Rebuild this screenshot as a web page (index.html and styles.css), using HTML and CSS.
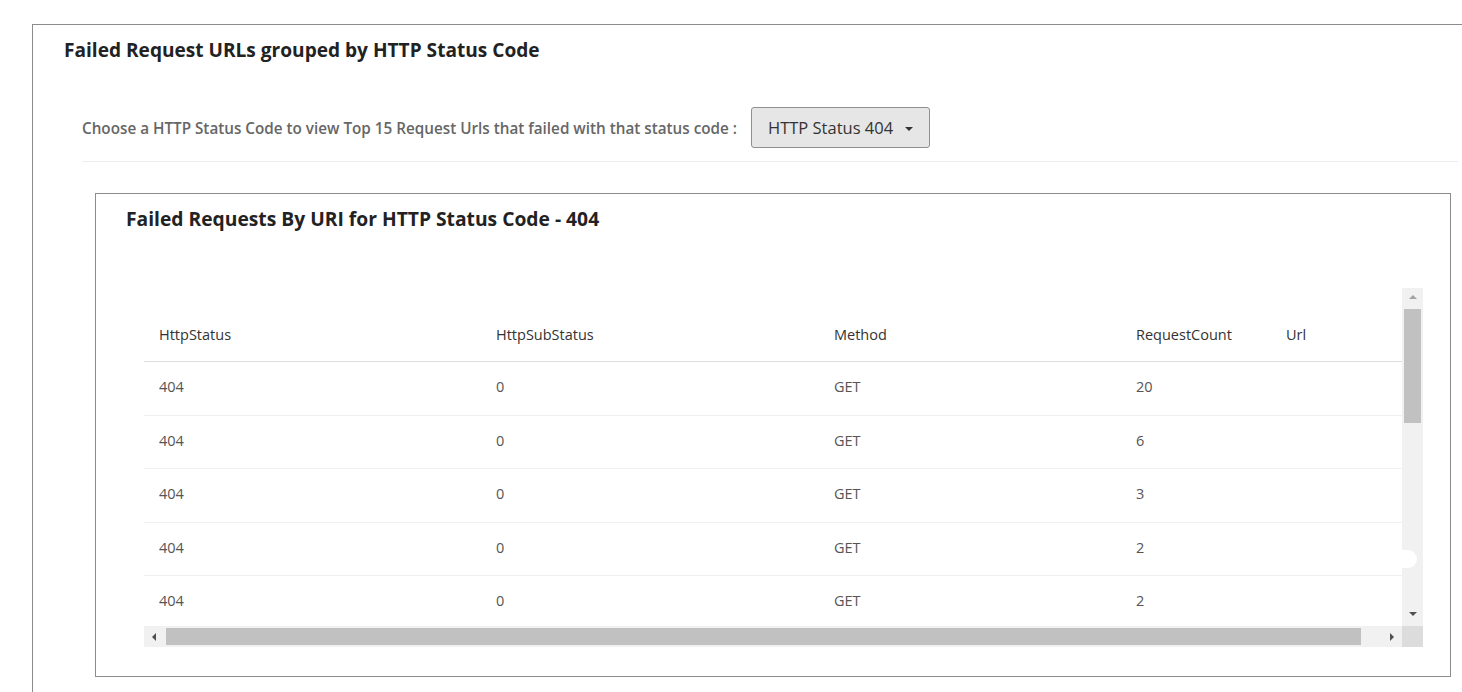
FILE: index.html
```html
<!DOCTYPE html>
<html>
<head>
<meta charset="utf-8">
<link rel="stylesheet" href="styles.css">
</head>
<body>
<div class="outer">
  <h1 class="title">Failed Request URLs grouped by HTTP Status Code</h1>
  <div class="filter">
    <span class="filter-label">Choose a HTTP Status Code to view Top 15 Request Urls that failed with that status code :</span>
    <button class="dropdown">HTTP Status 404 <span class="caret"></span></button>
  </div>
  <div class="divider"></div>
  <div class="inner">
    <h2 class="inner-title">Failed Requests By URI for HTTP Status Code - 404</h2>
    <div class="scrollbox">
      <div class="viewport">
        <table class="grid">
          <colgroup>
            <col class="c1"><col class="c2"><col class="c3"><col class="c4"><col class="c5">
          </colgroup>
          <thead>
            <tr><th>HttpStatus</th><th>HttpSubStatus</th><th>Method</th><th>RequestCount</th><th>Url</th></tr>
          </thead>
          <tbody>
            <tr><td>404</td><td>0</td><td>GET</td><td>20</td><td></td></tr>
            <tr><td>404</td><td>0</td><td>GET</td><td>6</td><td></td></tr>
            <tr><td>404</td><td>0</td><td>GET</td><td>3</td><td></td></tr>
            <tr><td>404</td><td>0</td><td>GET</td><td>2</td><td></td></tr>
            <tr><td>404</td><td>0</td><td>GET</td><td>2</td><td></td></tr>
          </tbody>
        </table>
      </div>
      <div class="vbar">
        <div class="sbtn"><span class="arr up"></span></div>
        <div class="vtrack"><div class="vthumb"></div></div>
        <div class="sbtn"><span class="arr down"></span></div>
      </div>
      <div class="hbar">
        <div class="sbtn"><span class="arr left"></span></div>
        <div class="htrack"><div class="hthumb"></div></div>
        <div class="sbtn"><span class="arr right"></span></div>
      </div>
      <div class="corner"></div>
      <div class="blot"></div>
    </div>
  </div>
</div>
</body>
</html>
```
FILE: styles.css
```css
html, body {
  margin: 0;
  padding: 0;
  background: #fff;
  overflow: hidden;
  height: 692px;
}
body {
  font-family: "Open Sans", "Noto Sans", sans-serif;
  color: #333;
}
.outer {
  margin: 24px 0 0 32px;
  border-top: 1px solid #8c8c8c;
  border-left: 1px solid #8c8c8c;
  padding: 12px 0 40px 31px;
}
.title {
  margin: 0;
  font-size: 19.1px;
  line-height: 26px;
  font-weight: 700;
  color: #222;
}
.filter {
  display: flex;
  align-items: center;
  margin: 44px 0 0 18px;
  gap: 14px;
}
.filter-label {
  font-size: 15.25px;
  font-weight: 600;
  color: #666;
}
.dropdown {
  display: flex;
  align-items: center;
  gap: 12px;
  height: 41px;
  padding: 0 16px 0 16px;
  background: #e6e6e6;
  border: 1px solid #8f8f8f;
  border-radius: 3px;
  font-family: inherit;
  font-size: 16.5px;
  color: #333;
}
.caret {
  width: 0;
  height: 0;
  border-left: 4.5px solid transparent;
  border-right: 4.5px solid transparent;
  border-top: 4.5px solid #333;
  margin-top: 2px;
}
.divider {
  height: 1px;
  background: #eeeeee;
  margin: 13px 4px 0 18px;
}
.inner {
  margin: 31px 0 0 31px;
  width: 1356px;
  box-sizing: border-box;
  border: 1px solid #8c8c8c;
  padding: 12px 27px 29px 48px;
}
.inner-title {
  margin: 0 0 0 -18px;
  font-size: 19.25px;
  line-height: 26px;
  font-weight: 700;
  color: #222;
}
.scrollbox {
  position: relative;
  margin-top: 56px;
  height: 359px;
  display: grid;
  grid-template-columns: 1fr 21px;
  grid-template-rows: 1fr 21px;
}
.viewport {
  overflow: hidden;
}
.grid {
  border-collapse: collapse;
  table-layout: fixed;
  width: 1290px;
  font-size: 14.5px;
}
.c1 { width: 337px; }
.c2 { width: 338px; }
.c3 { width: 302px; }
.c4 { width: 150px; }
.c5 { width: 163px; }
.grid th {
  text-align: left;
  font-weight: 400;
  color: #333;
  padding: 36px 15px 15px;
  line-height: 22px;
  border-bottom: 1px solid #dddddd;
}
.grid td {
  color: #555;
  padding: 15px 15px 17.5px;
  line-height: 20px;
  border-bottom: 1px solid #f0f0f0;
}
.vbar, .hbar {
  background: #f1f1f1;
  display: flex;
}
.vbar { flex-direction: column; }
.sbtn {
  flex: 0 0 21px;
  height: 21px;
  display: flex;
  align-items: center;
  justify-content: center;
}
.vtrack {
  flex: 1;
  padding: 0 2px;
}
.vthumb {
  height: 114px;
  background: #c1c1c1;
}
.htrack {
  flex: 1;
  padding: 2px 0;
}
.hthumb {
  width: 1195px;
  height: 17px;
  margin-left: 1px;
  background: #c1c1c1;
}
.corner { background: #dcdcdc; }
.arr { width: 0; height: 0; }
.arr.up {
  border-left: 4.5px solid transparent;
  border-right: 4.5px solid transparent;
  border-bottom: 4.5px solid #a3a3a3;
  margin-top: -4px;
}
.arr.down {
  border-left: 4.5px solid transparent;
  border-right: 4.5px solid transparent;
  border-top: 4.5px solid #505050;
  margin-top: -4px;
}
.arr.left {
  border-top: 4.5px solid transparent;
  border-bottom: 4.5px solid transparent;
  border-right: 4.5px solid #505050;
  margin-left: -2px;
}
.arr.right {
  border-top: 4.5px solid transparent;
  border-bottom: 4.5px solid transparent;
  border-left: 4.5px solid #505050;
  margin-left: 0;
}
.blot {
  position: absolute;
  left: 1236px;
  top: 262px;
  width: 37px;
  height: 18px;
  border-radius: 9px;
  background: #fff;
}
```
